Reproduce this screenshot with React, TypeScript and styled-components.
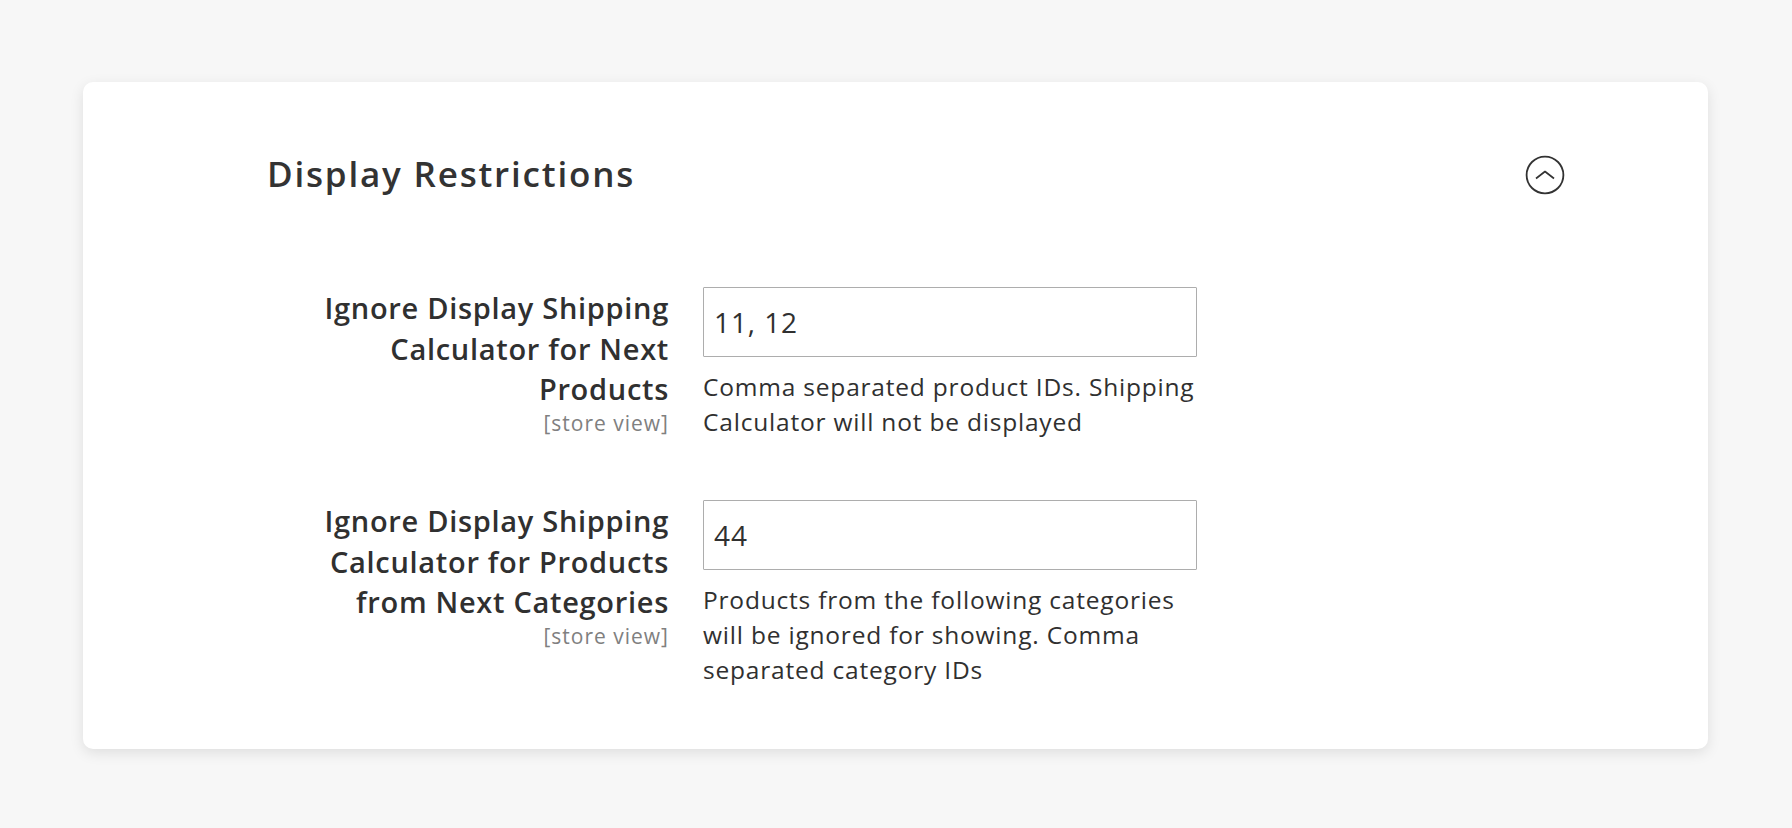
import styled, { createGlobalStyle } from 'styled-components'

const Global = createGlobalStyle`
  html, body { margin: 0; padding: 0; }
  body {
    background: #f7f7f7;
    font-family: "Open Sans", "Liberation Sans", sans-serif;
    color: #303030;
  }
`

type Field = {
  id: string
  label: string[]
  value: string
  note: string
}

const fields: Field[] = [
  {
    id: 'ignore-products',
    label: ['Ignore Display Shipping', 'Calculator for Next', 'Products'],
    value: '11, 12',
    note: 'Comma separated product IDs. Shipping Calculator will not be displayed',
  },
  {
    id: 'ignore-categories',
    label: ['Ignore Display Shipping', 'Calculator for Products', 'from Next Categories'],
    value: '44',
    note: 'Products from the following categories will be ignored for showing. Comma separated category IDs',
  },
]

function CollapseIcon() {
  return (
    <svg width="40" height="40" viewBox="0 0 40 40" fill="none">
      <circle cx="20" cy="20" r="18.4" stroke="#333" strokeWidth="1.8" />
      <polyline points="11,23.5 20,16.5 29,23.5" stroke="#333" strokeWidth="1.7" strokeLinejoin="round" />
    </svg>
  )
}

export default function App() {
  return (
    <Page>
      <Global />
      <Card>
        <Header>
          <Title>Display Restrictions</Title>
          <Toggle aria-label="Collapse">
            <CollapseIcon />
          </Toggle>
        </Header>

        <Fields>
          {fields.map(f => (
            <Row key={f.id}>
              <LabelCol>
                <Label htmlFor={f.id}>
                  {f.label.map(line => <span key={line}>{line}</span>)}
                </Label>
                <Scope>[store view]</Scope>
              </LabelCol>
              <Control>
                <Input id={f.id} defaultValue={f.value} />
                <Note>{f.note}</Note>
              </Control>
            </Row>
          ))}
        </Fields>
      </Card>
    </Page>
  )
}

const Page = styled.div`
  padding: 82px 84px 80px 83px;
`

const Card = styled.section`
  background: #fff;
  border-radius: 10px;
  box-shadow: 0 4px 14px rgba(0, 0, 0, 0.1);
  padding: 66px 143px 62px 184px;
`

const Header = styled.div`
  display: flex;
  align-items: center;
  justify-content: space-between;
`

const Title = styled.h2`
  margin: 0;
  font-size: 35px;
  line-height: 52px;
  font-weight: 600;
  letter-spacing: 1.8px;
  color: #333;
`

const Toggle = styled.button`
  display: flex;
  padding: 0;
  border: none;
  background: none;
  margin-top: 2px;
`

const Fields = styled.div`
  display: flex;
  flex-direction: column;
  gap: 61px;
  margin-top: 87px;
`

const Row = styled.div`
  display: grid;
  grid-template-columns: 402px 494px;
  column-gap: 34px;
  align-items: start;
`

const LabelCol = styled.div`
  display: flex;
  flex-direction: column;
  align-items: flex-end;
  padding-top: 1px;
  text-align: right;
`

const Label = styled.label`
  display: flex;
  flex-direction: column;
  align-items: flex-end;
  font-size: 29px;
  line-height: 40.6px;
  font-weight: 600;
  letter-spacing: 0.7px;
  color: #303030;
`

const Scope = styled.span`
  font-size: 21px;
  line-height: 26px;
  letter-spacing: 1px;
  color: #808080;
`

const Control = styled.div`
  display: flex;
  flex-direction: column;
`

const Input = styled.input`
  box-sizing: border-box;
  width: 100%;
  height: 70px;
  padding: 0 10px;
  border: 1.5px solid #adadad;
  border-radius: 1px;
  font-family: inherit;
  font-size: 28px;
  letter-spacing: 0.9px;
  color: #303030;
  outline: none;
`

const Note = styled.p`
  margin: 12px 0 0;
  font-size: 24.5px;
  line-height: 35px;
  letter-spacing: 0.8px;
  color: #303030;
`
